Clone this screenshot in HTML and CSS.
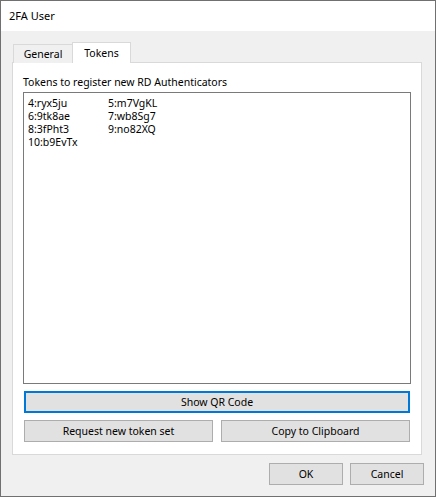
FILE: index.html
```html
<!DOCTYPE html>
<html lang="en">
  <head>
    <meta charset="UTF-8" />
    <title>2FA User</title>
    <link rel="stylesheet" href="styles.css">
  </head>
  <body>
    <div class="window">
      <div class="titlebar">2FA User</div>
      <div class="client">
        <div class="tabs">
          <div class="tab">General</div>
          <div class="tab active">Tokens</div>
        </div>
        <div class="panel">
          <div class="label">Tokens to register new RD Authenticators</div>
          <div class="tokens">
            <span>4:ryx5ju</span><span>5:m7VgKL</span>
            <span>6:9tk8ae</span><span>7:wb8Sg7</span>
            <span>8:3fPht3</span><span>9:no82XQ</span>
            <span>10:b9EvTx</span>
          </div>
          <button class="btn btn-focus">Show QR Code</button>
          <div class="btn-row">
            <button class="btn">Request new token set</button>
            <button class="btn">Copy to Clipboard</button>
          </div>
        </div>
        <div class="footer">
          <button class="btn btn-dlg">OK</button>
          <button class="btn btn-dlg">Cancel</button>
        </div>
      </div>
    </div>
  </body>
</html>
```

FILE: styles.css
```css
* {
  margin: 0;
  padding: 0;
  box-sizing: border-box;
}
body {
  font-family: "Noto Sans", "Liberation Sans", sans-serif;
  font-size: 10.5px;
  color: #000;
  background: #fff;
}
.window {
  width: 436px;
  height: 497px;
  border: 1px solid #707070;
  display: flex;
  flex-direction: column;
}
.titlebar {
  height: 30px;
  line-height: 30px;
  padding-left: 8px;
  font-size: 11px;
  background: #fff;
}
.client {
  flex: 1;
  background: #f0f0f0;
  padding: 11px 13px 0 11px;
  display: flex;
  flex-direction: column;
}
.tabs {
  display: flex;
  align-items: flex-end;
  height: 21px;
  padding-left: 1px;
  margin-bottom: -1px;
  position: relative;
  z-index: 1;
}
.tab {
  width: 60px;
  height: 19px;
  line-height: 18px;
  text-align: center;
  border: 1px solid #d9d9d9;
  border-bottom: none;
  background: #f0f0f0;
}
.tab.active {
  width: 59px;
  height: 21px;
  line-height: 20px;
  margin-left: -1px;
  background: #fff;
}
.panel {
  height: 393px;
  background: #fff;
  border: 1px solid #d9d9d9;
  padding: 10px 10px 12px 10px;
  display: flex;
  flex-direction: column;
}
.label {
  height: 19px;
  line-height: 18px;
}
.tokens {
  flex: 1;
  border: 1px solid #7a7a7a;
  padding: 4px 4px;
  display: grid;
  grid-template-columns: 80px 1fr;
  grid-auto-rows: 13px;
  line-height: 13px;
  align-content: start;
}
.btn {
  font-family: inherit;
  font-size: 10.5px;
  color: #000;
  background: #e1e1e1;
  border: 1px solid #adadad;
  height: 22px;
}
.btn-focus {
  margin: 7px 1px 0 1px;
  border: 2px solid #0078d7;
}
.btn-row {
  display: flex;
  gap: 8px;
  margin: 7px 1px 0 1px;
}
.btn-row .btn {
  flex: 1;
}
.footer {
  display: flex;
  justify-content: flex-end;
  gap: 7px;
  padding: 8px 0 0 0;
  margin-right: -2px;
}
.btn-dlg {
  width: 74px;
}
```
